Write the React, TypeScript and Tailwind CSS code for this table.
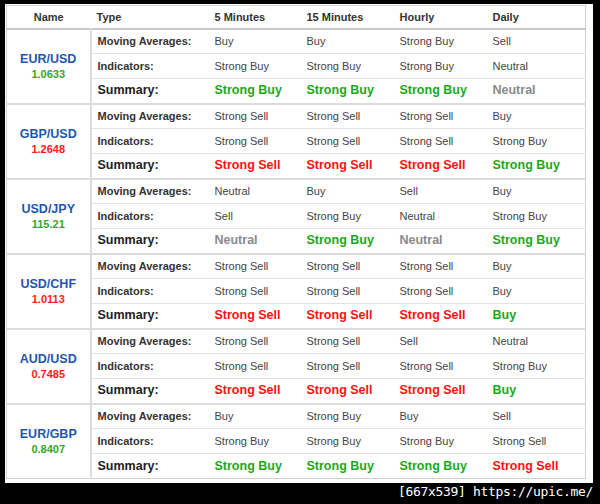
import React from 'react';

type Signal = 'Buy' | 'Strong Buy' | 'Sell' | 'Strong Sell' | 'Neutral';

interface Pair {
  name: string;
  price: string;
  up: boolean;
  ma: Signal[];
  ind: Signal[];
  sum: Signal[];
}

const pairs: Pair[] = [
  {
    name: 'EUR/USD', price: '1.0633', up: true,
    ma: ['Buy', 'Buy', 'Strong Buy', 'Sell'],
    ind: ['Strong Buy', 'Strong Buy', 'Strong Buy', 'Neutral'],
    sum: ['Strong Buy', 'Strong Buy', 'Strong Buy', 'Neutral'],
  },
  {
    name: 'GBP/USD', price: '1.2648', up: false,
    ma: ['Strong Sell', 'Strong Sell', 'Strong Sell', 'Buy'],
    ind: ['Strong Sell', 'Strong Sell', 'Strong Sell', 'Strong Buy'],
    sum: ['Strong Sell', 'Strong Sell', 'Strong Sell', 'Strong Buy'],
  },
  {
    name: 'USD/JPY', price: '115.21', up: true,
    ma: ['Neutral', 'Buy', 'Sell', 'Buy'],
    ind: ['Sell', 'Strong Buy', 'Neutral', 'Strong Buy'],
    sum: ['Neutral', 'Strong Buy', 'Neutral', 'Strong Buy'],
  },
  {
    name: 'USD/CHF', price: '1.0113', up: false,
    ma: ['Strong Sell', 'Strong Sell', 'Strong Sell', 'Buy'],
    ind: ['Strong Sell', 'Strong Sell', 'Strong Sell', 'Buy'],
    sum: ['Strong Sell', 'Strong Sell', 'Strong Sell', 'Buy'],
  },
  {
    name: 'AUD/USD', price: '0.7485', up: false,
    ma: ['Strong Sell', 'Strong Sell', 'Sell', 'Neutral'],
    ind: ['Strong Sell', 'Strong Sell', 'Strong Sell', 'Strong Buy'],
    sum: ['Strong Sell', 'Strong Sell', 'Strong Sell', 'Buy'],
  },
  {
    name: 'EUR/GBP', price: '0.8407', up: true,
    ma: ['Buy', 'Strong Buy', 'Buy', 'Sell'],
    ind: ['Strong Buy', 'Strong Buy', 'Strong Buy', 'Strong Sell'],
    sum: ['Strong Buy', 'Strong Buy', 'Strong Buy', 'Strong Sell'],
  },
];

function summaryColor(s: Signal) {
  if (s.includes('Buy')) return 'text-[#1aa81a]';
  if (s.includes('Sell')) return 'text-[#ff1010]';
  return 'text-[#8a8a8a]';
}

const cellCols = ['w-[92px]', 'w-[93px]', 'w-[93px]', 'w-auto'];

export default function App() {
  return (
    <div className="w-[600px] h-[504px] bg-black relative font-['Liberation_Sans',Arial,sans-serif]">
      <div className="absolute left-[5px] top-[4px] w-[588px] h-[479px] bg-white">
        <table className="ml-[1px] mt-[1px] w-[580px] border-collapse border border-[#d0d0d0] text-[11px] text-[#444]">
          <thead>
            <tr className="h-[23px] border-b-2 border-[#c8c8c8] text-[#333] font-bold">
              <th className="w-[84px] text-center font-bold">Name</th>
              <th className="w-[118px] text-left pl-[6px] font-bold">Type</th>
              {['5 Minutes', '15 Minutes', 'Hourly', 'Daily'].map((h, i) => (
                <th key={h} className={`${cellCols[i]} text-left pl-[6px] font-bold`}>{h}</th>
              ))}
            </tr>
          </thead>
          <tbody>
            {pairs.map((p) => (
              <React.Fragment key={p.name}>
                <tr className="h-[25px] border-t-2 border-[#dcdcdc]">
                  <td rowSpan={3} className="text-center align-middle border-r-2 border-[#dcdcdc]">
                    <div className="text-[12.5px] font-bold text-[#1f56ad] leading-[15px]">{p.name}</div>
                    <div className={`text-[11px] font-bold leading-[14px] ${p.up ? 'text-[#33a81f]' : 'text-[#ff1a1a]'}`}>{p.price}</div>
                  </td>
                  <td className="pl-[6px] font-bold text-[#333]">Moving Averages:</td>
                  {p.ma.map((s, i) => (
                    <td key={i} className="pl-[6px]">{s}</td>
                  ))}
                </tr>
                <tr className="h-[25px] border-t border-[#e2e2e2]">
                  <td className="pl-[6px] font-bold text-[#333]">Indicators:</td>
                  {p.ind.map((s, i) => (
                    <td key={i} className="pl-[6px]">{s}</td>
                  ))}
                </tr>
                <tr className="h-[25px] border-t border-[#e2e2e2]">
                  <td className="pl-[6px] font-bold text-[12.5px] text-[#222]">Summary:</td>
                  {p.sum.map((s, i) => (
                    <td key={i} className={`pl-[6px] font-bold text-[12.5px] ${summaryColor(s)}`}>{s}</td>
                  ))}
                </tr>
              </React.Fragment>
            ))}
          </tbody>
        </table>
      </div>
      <div className="absolute right-[7px] bottom-[3px] text-[13px] text-white font-['DejaVu_Sans_Mono',monospace] tracking-tight">
        [667x539] https://upic.me/
      </div>
    </div>
  );
}
